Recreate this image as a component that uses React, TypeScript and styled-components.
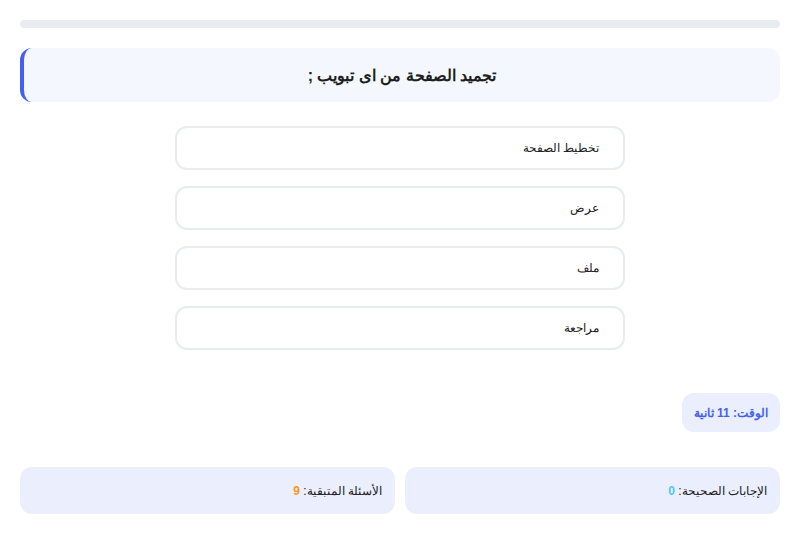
import React from 'react';
import styled, { createGlobalStyle } from 'styled-components';

const GlobalStyle = createGlobalStyle`
    html, body {
        margin: 0;
        padding: 0;
        background: #fff;
    }
    body {
        font-family: "Liberation Sans", sans-serif;
        color: #222;
    }
`;

const Page = styled.div`
    direction: rtl;
    padding: 20px 15px 20px 20px;
`;

const Progress = styled.div`
    height: 8px;
    border-radius: 4px;
    background-color: #e9ecef;
    margin-bottom: 20px;
`;

const QuestionCard = styled.div`
    height: 54px;
    box-sizing: border-box;
    display: flex;
    align-items: center;
    justify-content: center;
    background-color: #f4f7fe;
    border-left: 4px solid #4361ee;
    border-radius: 12px;
    font-size: 16px;
    font-weight: bold;
    color: #1f1f1f;
`;

const Options = styled.div`
    width: 450px;
    margin: 24px auto 0;
    display: flex;
    flex-direction: column;
    gap: 16px;
`;

const Option = styled.button`
    height: 44px;
    box-sizing: border-box;
    padding: 0 24px;
    background-color: #fff;
    border: 2px solid #e9ecef;
    border-radius: 12px;
    font-family: inherit;
    font-size: 12px;
    color: #222;
    text-align: right;
    direction: rtl;
    cursor: pointer;
`;

const TimerRow = styled.div`
    display: flex;
    margin-top: 43px;
`;

const Timer = styled.div`
    height: 39px;
    box-sizing: border-box;
    display: flex;
    align-items: center;
    padding: 0 12px;
    background-color: #eaeefd;
    border-radius: 12px;
    color: #4361ee;
    font-size: 12px;
    font-weight: bold;
`;

const Stats = styled.div`
    display: grid;
    grid-template-columns: 1fr 1fr;
    gap: 10px;
    margin-top: 35px;
`;

const StatBox = styled.div`
    height: 47px;
    box-sizing: border-box;
    display: flex;
    align-items: center;
    padding: 0 13px;
    background-color: #ebeefc;
    border-radius: 12px;
    font-size: 12px;
    color: #222;
`;

const StatValue = styled.span<{ $color: string }>`
    color: ${p => p.$color};
    font-weight: bold;
`;

const options = ['تخطيط الصفحة', 'عرض', 'ملف', 'مراجعة'];

export default function App() {
    return (
        <>
            <GlobalStyle />
            <Page>
                <Progress />
                <QuestionCard>تجميد الصفحة من اى تبويب ;</QuestionCard>
                <Options>
                    {options.map(o => (
                        <Option key={o}>{o}</Option>
                    ))}
                </Options>
                <TimerRow>
                    <Timer>الوقت: 11 ثانية</Timer>
                </TimerRow>
                <Stats>
                    <StatBox>
                        الإجابات الصحيحة: <StatValue $color="#4cc9f0">&nbsp;0</StatValue>
                    </StatBox>
                    <StatBox>
                        الأسئلة المتبقية: <StatValue $color="#f8961e">&nbsp;9</StatValue>
                    </StatBox>
                </Stats>
            </Page>
        </>
    );
}
